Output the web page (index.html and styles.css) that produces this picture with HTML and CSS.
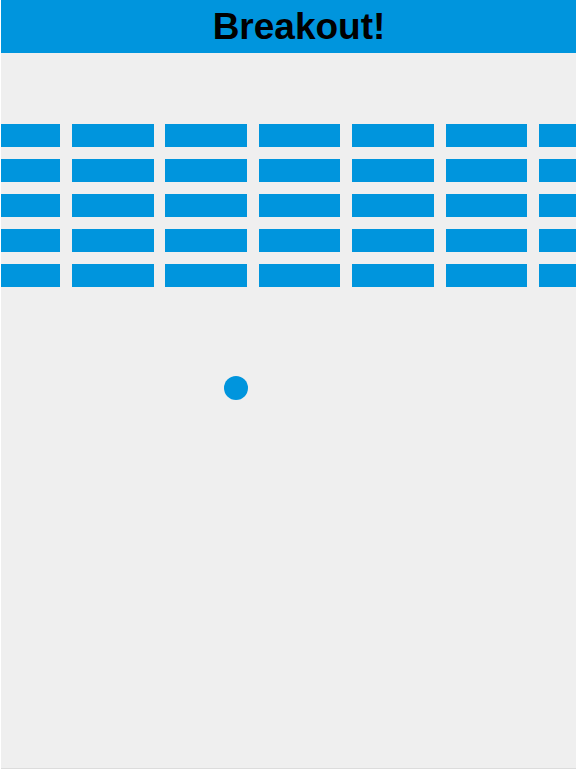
FILE: index.html
```html
<!DOCTYPE html>
<html lang="en">
<head>
<meta charset="utf-8">
<title>Breakout!</title>
<link rel="stylesheet" href="styles.css">
</head>
<body>
<header class="title-bar"><h1 class="title">Breakout!</h1></header>
<main class="game">
  <div class="bricks">
    <div class="brick-row"><div class="brick"></div><div class="brick"></div><div class="brick"></div><div class="brick"></div><div class="brick"></div><div class="brick"></div><div class="brick"></div></div>
    <div class="brick-row"><div class="brick"></div><div class="brick"></div><div class="brick"></div><div class="brick"></div><div class="brick"></div><div class="brick"></div><div class="brick"></div></div>
    <div class="brick-row"><div class="brick"></div><div class="brick"></div><div class="brick"></div><div class="brick"></div><div class="brick"></div><div class="brick"></div><div class="brick"></div></div>
    <div class="brick-row"><div class="brick"></div><div class="brick"></div><div class="brick"></div><div class="brick"></div><div class="brick"></div><div class="brick"></div><div class="brick"></div></div>
    <div class="brick-row"><div class="brick"></div><div class="brick"></div><div class="brick"></div><div class="brick"></div><div class="brick"></div><div class="brick"></div><div class="brick"></div></div>
  </div>
  <div class="ball"></div>
</main>
</body>
</html>
```
FILE: styles.css
```css
html, body {
  margin: 0;
  padding: 0;
  background: #ffffff;
  overflow: hidden;
}
.title-bar {
  height: 53px;
  margin-left: 1px;
  background: #0095dd;
  display: flex;
  align-items: center;
  justify-content: center;
  padding-left: 21px;
}
.title {
  margin: 0;
  font-family: "Liberation Sans", Arial, sans-serif;
  font-weight: bold;
  font-size: 37px;
  line-height: 1;
  color: #000000;
}
.game {
  position: relative;
  margin-left: 1px;
  height: 715px;
  background: #efefef;
  border-bottom: 1px solid #dcdcdc;
  overflow: hidden;
}
.bricks {
  padding-top: 71px;
  margin-left: -22.4px;
  display: flex;
  flex-direction: column;
  gap: 12px;
}
.brick-row {
  display: flex;
  gap: 11.8px;
}
.brick {
  flex: 0 0 81.6px;
  height: 23px;
  background: #0095dd;
}
.ball {
  position: absolute;
  left: 223.3px;
  top: 322.7px;
  width: 24px;
  height: 24px;
  border-radius: 50%;
  background: #0095dd;
}
```
